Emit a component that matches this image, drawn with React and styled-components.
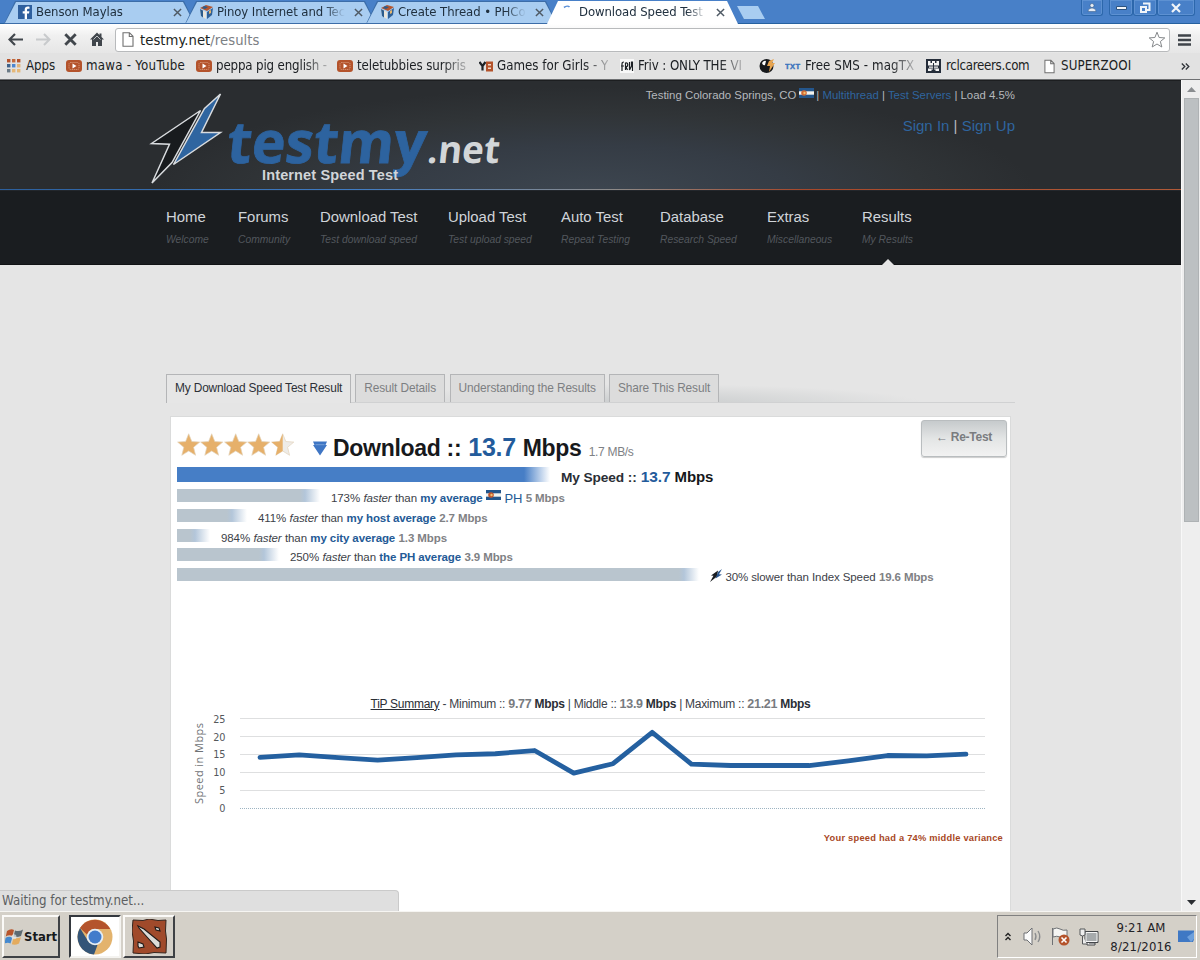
import React from 'react'
import styled, { createGlobalStyle } from 'styled-components'

const GlobalStyle = createGlobalStyle`
* { box-sizing: border-box; }
body {
  margin: 0;
  overflow: hidden;
  background: #e5e5e5;
}
svg { display: block; flex: none; }
`

const ui = '"DejaVu Sans Condensed", "DejaVu Sans", sans-serif'
const arial = '"Liberation Sans", Arial, sans-serif'

const tabs = [
  { title: 'Benson Maylas', icon: 'facebook' },
  { title: 'Pinoy Internet and Tec', icon: 'cube' },
  { title: 'Create Thread • PHCo', icon: 'cube' },
  { title: 'Download Speed Test', icon: 'loading', active: true },
]

const bookmarks = [
  { icon: 'apps', text: 'Apps', width: 59, iconWidth: 19 },
  { icon: 'video', text: 'mawa - YouTube', width: 130, iconWidth: 20, spacing: 0.25 },
  { icon: 'video', text: 'peppa pig english -', width: 141, iconWidth: 20, fade: true, spacing: -0.15 },
  { icon: 'video', text: 'teletubbies surpris', width: 142, iconWidth: 20, fade: true },
  { icon: 'y8', text: 'Games for Girls - Y', width: 141, iconWidth: 18, fade: true, spacing: 0 },
  { icon: 'friv', text: 'Friv : ONLY THE VI', width: 139, iconWidth: 18, fade: true },
  { icon: 'bolt', text: '', width: 26, iconWidth: 20 },
  { icon: 'txt', text: 'Free SMS - magTX', width: 141, iconWidth: 20, fade: true, spacing: 0.1 },
  { icon: 'castle', text: 'rclcareers.com', width: 118, iconWidth: 20, spacing: -0.3 },
  { icon: 'page', text: 'SUPERZOOI', width: 120, iconWidth: 17, spacing: 0.1 },
]

const menu = [
  ['Home', 'Welcome', 72],
  ['Forums', 'Community', 82],
  ['Download Test', 'Test download speed', 128],
  ['Upload Test', 'Test upload speed', 113],
  ['Auto Test', 'Repeat Testing', 99],
  ['Database', 'Research Speed', 107],
  ['Extras', 'Miscellaneous', 95],
  ['Results', 'My Results', 53],
]

const resultTabs = [
  ['My Download Speed Test Result', 185],
  ['Result Details', 90],
  ['Understanding the Results', 155],
  ['Share This Result', 110],
]

const averages = [
  { bar: 143, percent: '173%', name: 'my average', flag: true, speed: '5 Mbps' },
  { bar: 70, percent: '411%', name: 'my host average', speed: '2.7 Mbps' },
  { bar: 33, percent: '984%', name: 'my city average', speed: '1.3 Mbps' },
  { bar: 102, percent: '250%', name: 'the PH average', speed: '3.9 Mbps' },
]

const samples = [14.2, 14.9, 14.1, 13.4, 14.1, 14.9, 15.2, 16.1, 9.77, 12.4, 21.21, 12.3, 11.9, 11.9, 11.9, 13.2, 14.7, 14.6, 15.1]

const Cube = () => (
  <svg width="15" height="16" viewBox="0 0 15 16">
    <path d="M1 4 7 1l7 2-6 4z" fill="#b5562f" />
    <path d="M1 5l6 3v7l-5-3z" fill="#e8e4da" />
    <path d="M8 8l6-4-1 7-5 4z" fill="#2f6096" />
    <path d="M1 5l3 1.500v7L2 12zM5 2l4 1-3 2-3-1z" fill="#2b5b8c" />
    <path d="M10 7l2-1v3l-2 1z" fill="#e6b56c" />
  </svg>
)

const Facebook = () => (
  <svg width="14" height="14" viewBox="0 0 14 14">
    <path d="M0 0h14v14H0z" fill="#2e5f9e" />
    <path d="M9 14V8.500h2l.4-2.300H9V5c0-.8.400-1.200 1.200-1.200h1.300V1.700C11 1.600 10.500 1.500 9.900 1.500 7.900 1.500 6.700 2.700 6.700 4.700v1.500h-2v2.300h2V14z" fill="#fff" />
  </svg>
)

const Spinner = () => (
  <svg width="14" height="14" viewBox="0 0 14 14">
    <path d="M3 2.500C5 .8 7.500 1 8.500 2" fill="none" stroke="#5a8fd6" strokeWidth="1.700" />
  </svg>
)

const Flag = ({ dark }) => (
  <svg width="15" height="10" viewBox="0 0 15 10">
    <path d="M0 0h15v10H0z" fill="#24568c" />
    <path d="M0 3.300h15v3.400H0z" fill="#f4f4f0" />
    <circle cx="5" cy="5" r="2.800" fill={dark ? '#c2562c' : '#cf6a36'} />
    <circle cx="5.500" cy="5" r="1.200" fill="#efc070" />
  </svg>
)

const Page = ({ size = 12 }) => (
  <svg width={size} height="15" viewBox="0 0 12 15">
    <path d="M1 .7h6.500L11 4.300v10H1zM7.300.8v3.700H11" fill="#fff" stroke="#707070" strokeWidth="1.100" />
  </svg>
)

const icons = {
  apps: (
    <svg width="14" height="14" viewBox="0 0 14 14">
      {['#b5532c', '#c46a3c', '#b5532c', '#3f628a', '#4b86d0', '#e1b478', '#6b7a86', '#e6b878', '#e6b878'].map((c, i) => (
        <rect key={i} x={(i % 3) * 5} y={Math.floor(i / 3) * 5} width="3.400" height="3.400" fill={c} />
      ))}
    </svg>
  ),
  video: (
    <svg width="16" height="12" viewBox="0 0 16 12">
      <rect width="16" height="12" rx="3" fill="#b4532b" />
      <rect x="3" y="2.500" width="10" height="7" rx="1.500" fill="none" stroke="#dca183" strokeDasharray="1 1" />
      <path d="M6.500 3.500v5l4-2.500z" fill="#fff" />
    </svg>
  ),
  y8: (
    <svg width="14" height="11" viewBox="0 0 14 11">
      <path d="M.5 1l3 4v4.500M6.500 1l-3 4" fill="none" stroke="#1d2226" strokeWidth="2.200" />
      <rect x="7" y=".5" width="7" height="10" fill="#b4532b" />
      <path d="M9 3h3v1.500H9zM9 6.500h3V8H9z" fill="#f4d9c8" />
    </svg>
  ),
  friv: (
    <svg width="14" height="14" viewBox="0 0 14 14">
      <path d="M0 0h14v14H0z" fill="#f8f8f8" />
      <path d="M2 12V5q0-2 2-2M1 7h3M5.500 11V4q3-.5 2 3l-1.500 1 1.500 3M9.500 3v8l2-4V3h1v9" fill="none" stroke="#1c2024" strokeWidth="1.200" />
    </svg>
  ),
  bolt: (
    <svg width="16" height="14" viewBox="0 0 16 14">
      <circle cx="7.500" cy="7" r="7" fill="#17191c" />
      <path d="M3 4q2-3 4-2L6 6q-2 1-3-2z" fill="#fff" />
      <path d="M10 2l5-2-2 4h3l-6 9 1-6H8z" fill="#e7a450" />
    </svg>
  ),
  txt: (
    <svg width="16" height="8" viewBox="0 0 16 8">
      <text x="0" y="7" fontFamily={arial} fontSize="7.500" fontWeight="bold" fill="#3b74bd" stroke="#3b74bd" strokeWidth=".4" textLength="15">TXT</text>
    </svg>
  ),
  castle: (
    <svg width="15" height="14" viewBox="0 0 15 14">
      <path d="M0 0h15v14H0z" fill="#252d3a" />
      <path d="M2 2h2.500v2H6V2h3v2h1.500V2H13v4.500H2zM3 7.500h9v1.200H3zM2 9.500h11V12H9.500v-1.500h-4V12H2z" fill="#f4f4f4" />
      <path d="M7 4h1v7H7z" fill="#252d3a" />
    </svg>
  ),
  page: <Page size={11} />,
}

const tabIcons = { facebook: <Facebook />, cube: <Cube />, loading: <Spinner /> }

const Star = ({ half }) => (
  <svg width="23.400" height="24" viewBox="0 0 23.400 24">
    <path d="M11.700.8l3.100 7.700 8 .6-6.200 5.200 2 8-6.900-4.300-6.900 4.300 2-8L.6 9.100l8-.6z" fill={half ? '#eeece8' : '#e6b06a'} stroke="#e3d3ba" strokeWidth=".7" />
    {half && <path d="M11.700.8v17.200l-6.900 4.300 2-8L.6 9.100l8-.6z" fill="#e6b06a" />}
  </svg>
)

const DownArrow = () => (
  <svg width="14" height="15" viewBox="0 0 14 15">
    <path d="M0 .5h14L12.500 4H14L7 14.500 0 4h1.500z" fill="#3f76c4" />
    <path d="M2.500 3.700h9" stroke="#8cb0e0" strokeWidth=".7" />
  </svg>
)

const SmallBolt = () => (
  <svg width="12" height="13" viewBox="0 0 12 13">
    <path d="M8 1.500L1 6.500l2.500.3L0 13l7-5.500z" fill="#191c20" />
    <path d="M12 0L8 3 5.500 9.500 12 5.500 9 5.200z" fill="#2a568e" />
  </svg>
)

const points = samples.map((v, i) => `${74 + i * 39.22},${108 - v * 3.570}`).join(' ')

const Chart = () => (
  <svg width="800" height="120" viewBox="0 0 800 120">
    {[25, 20, 15, 10, 5, 0].map((v, i) => (
      <g key={v}>
        <line x1="54" x2="799" y1={18.500 + i * 18} y2={18.500 + i * 18} stroke={v ? '#dedfe0' : '#9db4c2'} strokeDasharray={v ? 'none' : '1 1'} />
        <text x="39.500" y={22.700 + i * 17.800} textAnchor="end" fontFamily={ui} fontSize="10.800" fill="#55585c">{v}</text>
      </g>
    ))}
    <text transform="translate(17 104) rotate(-90)" fontFamily="Open Sans, sans-serif" fontSize="11" textLength="81" fill="#6f7275">Speed in Mbps</text>
    <polyline points={points} fill="none" stroke="#2460a0" strokeWidth="4.800" strokeLinecap="round" strokeLinejoin="round" />
  </svg>
)

const Logo = () => (
  <svg width="370" height="96" viewBox="0 0 370 96">
    <path d="M51.500 17.500L2.500 50.500l18 .8L3 90l20-20.500z" fill="#181b1e" stroke="#d9dcdf" strokeWidth="1.500" strokeLinejoin="miter" />
    <path d="M71.500 1L55.500 15.500 24.500 71.500 71.500 39.500H52.500z" fill="#2f65a0" stroke="#d9dcdf" strokeWidth="1.500" />
    <g transform="skewX(-6)">
      <text x="84" y="70.500" fontFamily="Open Sans, sans-serif" fontWeight="bold" fontSize="58" textLength="199" lengthAdjust="spacingAndGlyphs" fill="#2d639f" stroke="#2d639f" strokeWidth=".8">testmy</text>
      <text x="285" y="70.500" fontFamily="Open Sans, sans-serif" fontWeight="bold" fontSize="38" textLength="72" lengthAdjust="spacingAndGlyphs" fill="#d3d6d8">.net</text>
    </g>
    <text x="113" y="86.500" fontFamily={arial} fontWeight="bold" fontSize="14.500" textLength="136" fill="#d2d5d8">Internet Speed Test</text>
  </svg>
)

const Screen = styled.div`
width: 1200px;
height: 960px;
display: flex;
flex-direction: column;
overflow: hidden;
font-family: ${arial};
white-space: nowrap;
`

const TitleBar = styled.div`
height: 24px;
flex: none;
display: flex;
align-items: flex-start;
padding-left: 4px;
background: #4880c8;
border-bottom: 1px solid #26619f;
`

const TabShape = styled.div`
width: 191px;
height: 24px;
flex: none;
margin-right: -10px;
padding: 1px 1px 0;
position: relative;
z-index: ${props => props.$active ? 2 : 1};
background: ${props => props.$active ? '#fff' : '#3c6da8'};
clip-path: polygon(0 100%, 11px 1px, 180px 1px, 100% 100%);
`

const TabFace = styled.div`
height: 22px;
display: flex;
align-items: center;
padding: 0 11px 0 13px;
background: ${props => props.$active ? '#fff' : '#a9cdf1'};
clip-path: polygon(0 100%, 11px 1px, 178px 1px, 100% 100%);
`

const TabIcon = styled.span`
width: 18px;
flex: none;
`

const TabTitle = styled.span`
flex: 1;
overflow: hidden;
font: 13px/20px ${ui};
letter-spacing: -0.07px;
color: #20303f;
mask-image: linear-gradient(90deg, #000 84%, transparent);
`

const Close = styled.span`
width: 10px;
margin-left: 9px;
`

const NewTab = styled.div`
width: 28px;
height: 13px;
margin: 6px 0 0 9px;
background: #a9cdf1;
clip-path: polygon(0 0, 21px 0, 28px 100%, 7px 100%);
`

const WindowButtons = styled.div`
display: flex;
margin-left: auto;
padding-right: 5px;
`

const WindowButton = styled.div`
width: ${props => props.$width}px;
height: 16px;
margin-right: ${props => props.$gap || 0}px;
display: flex;
align-items: center;
justify-content: center;
border: 1px solid #2c67ac;
border-top: 0;
border-radius: 0 0 3px 3px;
box-shadow: inset 0 0 0 1px #5d91d2;
`

const Toolbar = styled.div`
height: 29px;
flex: none;
display: flex;
align-items: center;
padding: 3px 9px 1px 8px;
background: linear-gradient(#fff, #f0f0f0 40%, #e6e6e6);
`

const NavIcons = styled.div`
width: 107px;
display: flex;
align-items: center;
gap: 13px;
`

const Omnibox = styled.div`
width: 1055px;
height: 24px;
display: flex;
align-items: center;
padding: 0 3px 0 6px;
gap: 6px;
background: #fff;
border: 1px solid #b8babc;
border-radius: 3px;
font: 14.700px/22px ${ui};
letter-spacing: 0.05px;
color: #1c1f22;
`

const Url = styled.span`
flex: 1;
span { color: #7c8084; }
`

const Bookmarks = styled.div`
height: 27px;
flex: none;
display: flex;
align-items: center;
padding: 0 10px 0 7px;
background: #e2e2e2;
border-bottom: 1px solid #6e7072;
font: 13.200px/20px ${ui};
color: #1b1e22;
`

const Bookmark = styled.div`
width: ${props => props.$width}px;
flex: none;
display: flex;
align-items: center;
`

const BookmarkIcon = styled.span`
width: ${props => props.$width}px;
flex: none;
`

const BookmarkText = styled.span`
letter-spacing: ${props => props.$spacing}px;
mask-image: ${props => props.$fade ? 'linear-gradient(90deg, #000 78%, rgba(0, 0, 0, .25))' : 'none'};
`

const Viewport = styled.div`
height: 831px;
flex: none;
display: flex;
position: relative;
`

const Site = styled.div`
width: 1181px;
display: flex;
flex-direction: column;
overflow: hidden;
background: #e5e5e5;
`

const Scrollbar = styled.div`
width: 19px;
display: flex;
flex-direction: column;
align-items: center;
background: #eeeeee;
border-left: 1px solid #f8f8f8;
`

const ScrollArrow = styled.div`
height: 18px;
display: flex;
align-items: center;
`

const Thumb = styled.div`
width: 15px;
height: 424px;
margin-bottom: auto;
background: #bcc0c2;
border: 1px solid #aeb2b4;
`

const Header = styled.header`
height: 109px;
flex: none;
display: flex;
justify-content: space-between;
padding: 12px 166px 0 149px;
background: radial-gradient(ellipse 440px 106px at 595px 112px, #3d4650, #353c45 45%, #303437 75%, #2a2d30);
border-top: 1px solid #1c1e20;
`

const HeaderLine = styled.div`
height: 2px;
flex: none;
background: linear-gradient(90deg, #2c5f9c, #3f7cc4 30%, #8d8a88 52%, #a8482a 68%, #b05a38);
border-bottom: 1px solid #23272c;
`

const HeaderInfo = styled.div`
display: flex;
flex-direction: column;
align-items: flex-end;
color: #b6b9bd;
`

const ServerLine = styled.div`
display: flex;
align-items: flex-start;
gap: 2.500px;
font-size: 11.400px;
line-height: 13px;
margin-top: -4px;
svg { margin-top: -1px; }
`

const Blue = styled.span`
color: #2f659f;
`

const SignLine = styled.div`
margin-top: 14px;
font-size: 15px;
line-height: 20px;
`

const Menu = styled.nav`
height: 74px;
flex: none;
display: flex;
padding: 16px 0 0 166px;
background: #1a1d20;
border-bottom: 1px solid #111315;
`

const MenuItem = styled.div`
width: ${props => props.$width}px;
position: relative;
`

const MenuTitle = styled.div`
font-size: 14.900px;
line-height: 20px;
color: #d0d4d9;
`

const MenuHint = styled.div`
margin-top: 7px;
font-size: 10.300px;
line-height: 12px;
font-style: italic;
color: #52575d;
`

const Notch = styled.div`
position: absolute;
left: 20px;
bottom: -1px;
border: 6px solid transparent;
border-top: 0;
border-bottom-color: #e5e5e5;
`

const ResultTabs = styled.div`
height: 29px;
flex: none;
display: flex;
gap: 4.300px;
margin: 109px 166px 0;
border-bottom: 1px solid #d0d1d2;
background: radial-gradient(ellipse 280px 20px at 480px 30px, #c8cbcc, #e5e5e5);
`

const ResultTab = styled.div`
width: ${props => props.$width}px;
height: ${props => props.$active ? 29 : 28}px;
padding-left: 8px;
border: 1px solid #b4b5b7;
border-bottom: 0;
background: ${props => props.$active ? '#e6e6e6' : '#dcdcdc'};
font-size: 11.900px;
line-height: 26px;
letter-spacing: ${props => props.$active ? -0.15 : -0.12}px;
color: ${props => props.$active ? '#2c3036' : '#7d7f82'};
`

const Panel = styled.main`
width: 841px;
flex: 1;
margin: 13px 0 0 170px;
padding: 0 3px 0 6px;
background: #fff;
border: 1px solid #dadbdb;
border-bottom: 0;
`

const PanelTop = styled.div`
height: 50px;
display: flex;
align-items: flex-start;
`

const Stars = styled.div`
display: flex;
padding-top: 16px;
width: 136px;
`

const Heading = styled.div`
display: flex;
align-items: baseline;
padding-top: 13px;
line-height: 34px;
font-size: 23px;
letter-spacing: -0.3px;
font-weight: bold;
color: #17191c;
svg { margin-right: 6px; }
`

const Speed = styled.span`
font-size: ${props => props.$size}px;
color: #235b9b;
margin: 0 ${props => props.$gap}px;
`

const Bytes = styled.span`
margin-left: 7px;
font-size: 12px;
font-weight: normal;
color: #7e8185;
`

const Retest = styled.button`
width: 86px;
height: 37px;
margin: 3px 0 0 auto;
padding: 0 0 4px;
border: 1px solid #b9bdbf;
border-radius: 3px;
background: linear-gradient(#c6cacc, #e3e5e5 50%, #f2f2f2);
box-shadow: 0 1px 1px #ccc;
font: bold 12px ${arial};
letter-spacing: -0.25px;
color: #7a7c7f;
`

const ResultRow = styled.div`
height: ${props => props.$main ? 22.2 : 19.700}px;
display: flex;
align-items: flex-start;
font-size: 11.500px;
letter-spacing: -0.1px;
color: #3c4148;
`

const Bar = styled.div`
height: ${props => props.$main ? 15 : 13}px;
margin-right: 11px;
background: ${props => props.$main
    ? 'linear-gradient(90deg, #467ec6 calc(100% - 26px), rgba(255, 255, 255, 0))'
    : 'linear-gradient(90deg, #b9c5ce calc(100% - 20px), #b3c6da calc(100% - 15px), rgba(255, 255, 255, 0))'};
`

const MySpeed = styled.div`
display: flex;
align-items: baseline;
gap: 4px;
line-height: 19px;
font-size: 13.700px;
font-weight: bold;
color: #2a2e35;
b { font-size: 15px; color: #15171a; }
`

const RowText = styled.div`
display: flex;
gap: 3.400px;
padding-top: 2px;
line-height: 15px;
svg { margin: -1px 0 0; }
strong { color: #245a96; }
b { color: #808184; }
`

const PH = styled.span`
font-size: 13px;
color: #245a96;
`

const Summary = styled.div`
height: 19px;
margin: 106.300px 3px 0 0;
padding-top: 2px;
text-align: center;
font-size: 12px;
line-height: 17px;
letter-spacing: -0.28px;
color: #3c4148;
b { color: #787b7f; font-size: 12.500px; }
strong { color: #2a2e35; }
u { color: #2a2e35; }
`

const Plot = styled.div`
margin: -13px 0 0 9px;
`

const Variance = styled.div`
margin-top: 11px;
padding-right: 4px;
text-align: right;
font: bold 9.300px/14px ${arial};
letter-spacing: 0.23px;
color: #a8481f;
`

const Status = styled.div`
position: absolute;
left: 0;
bottom: 0;
width: 399px;
height: 21px;
padding-left: 2px;
background: #dfdfdf;
border: 1px solid #cacaca;
border-left: 0;
border-bottom: 0;
border-top-right-radius: 4px;
font: 13.200px/20px ${ui};
color: #5c5e61;
`

const Taskbar = styled.div`
height: 49px;
flex: none;
display: flex;
align-items: center;
padding: 3px 3px 2px 2px;
background: #d4d0c8;
border-top: 1px solid #f6f5f2;
`

const TaskButton = styled.div`
width: ${props => props.$width}px;
height: 43px;
margin-right: ${props => props.$gap || 0}px;
display: flex;
align-items: center;
justify-content: center;
background: ${props => props.$pressed ? '#fff' : '#d4d0c8'};
border: 2px solid;
border-color: ${props => props.$pressed ? '#34383e #f4f3f0 #f4f3f0 #34383e' : '#fbfaf8 #3e4145 #3e4145 #fbfaf8'};
font: bold 13px ${ui};
letter-spacing: -0.1px;
color: #17191c;
`

const Tray = styled.div`
width: 200px;
height: 43px;
margin-left: auto;
display: flex;
align-items: center;
padding: 0 1px 0 7px;
border: 1px solid;
border-color: #808080 #fff #fff #808080;
`

const TrayIcons = styled.div`
display: flex;
align-items: center;
width: 104px;
gap: 8.500px;
svg:first-child { margin-right: 3px; }
`

const Clock = styled.div`
width: 64px;
margin-right: 5px;
text-align: center;
font: 13px/19px ${ui};
letter-spacing: 0.15px;
color: #1f2226;
`

const Cross = ({ size = 10, color = '#4e5964', width = 1.6 }) => (
  <svg width={size} height={size} viewBox="0 0 10 10">
    <path d="M1 1l8 8M9 1L1 9" stroke={color} strokeWidth={width} />
  </svg>
)

const BrowserTabs = () => (
  <TitleBar>
    {tabs.map(t => (
      <TabShape key={t.title} $active={t.active}>
        <TabFace $active={t.active}>
          <TabIcon>{tabIcons[t.icon]}</TabIcon>
          <TabTitle>{t.title}</TabTitle>
          <Close><Cross size={9} /></Close>
        </TabFace>
      </TabShape>
    ))}
    <NewTab />
    <WindowButtons>
      <WindowButton $width={22} $gap={6}>
        <svg width="10" height="9" viewBox="0 0 10 9"><circle cx="5" cy="2.500" r="2" fill="#e9eef5" stroke="#2c5380" strokeWidth=".5" /><path d="M1 8.500q0-3.500 4-3.500t4 3.500z" fill="#e9eef5" stroke="#2c5380" strokeWidth=".5" /></svg>
      </WindowButton>
      <WindowButton $width={24}>
        <svg width="11" height="4" viewBox="0 0 11 4"><path d="M.5.5h10v3H.5z" fill="#f2f5f9" stroke="#2c5380" /></svg>
      </WindowButton>
      <WindowButton $width={24}>
        <svg width="12" height="12" viewBox="0 0 12 12"><path d="M4 1.500h6.500V8H8" fill="none" stroke="#f2f5f9" strokeWidth="2" /><path d="M2 5h5v5H2z" fill="none" stroke="#f2f5f9" strokeWidth="2" /></svg>
      </WindowButton>
      <WindowButton $width={38}><Cross color="#f2f5f9" width={2.2} /></WindowButton>
    </WindowButtons>
  </TitleBar>
)

const AddressBar = () => (
  <Toolbar>
    <NavIcons>
      <svg width="15" height="13" viewBox="0 0 15 13"><path d="M7 1L1.500 6.500 7 12M2 6.500h13" fill="none" stroke="#41464c" strokeWidth="2.200" /></svg>
      <svg width="15" height="13" viewBox="0 0 15 13"><path d="M8 1l5.500 5.500L8 12M13 6.500H0" fill="none" stroke="#c8cacc" strokeWidth="2" /></svg>
      <Cross size={13} color="#41464c" width={2.2} />
      <svg width="14" height="15" viewBox="0 0 14 15"><path d="M7 .5L0 7.500h2V14h4v-4h2v4h4V7.500h2L11.500 5V1.500h-2V3z" fill="#41464c" /><path d="M7 4l3.500 3.500M7 4L3.500 7.500" stroke="#dfe1e3" strokeWidth=".8" /></svg>
    </NavIcons>
    <Omnibox>
      <Page />
      <Url>testmy.net<span>/results</span></Url>
      <svg width="18" height="17" viewBox="0 0 18 17"><path d="M9 1.200l2.100 5.300 5.700.4-4.400 3.600 1.400 5.500L9 13l-4.800 3 1.400-5.500L1.200 6.900l5.700-.4z" fill="none" stroke="#85888b" /></svg>
    </Omnibox>
    <svg width="13" height="12" viewBox="0 0 13 12" style={{ marginLeft: 'auto' }}><path d="M0 1.500h13M0 6h13M0 10.500h13" stroke="#3f444a" strokeWidth="2.600" /></svg>
  </Toolbar>
)

const BookmarkBar = () => (
  <Bookmarks>
    {bookmarks.map((b, i) => (
      <Bookmark key={i} $width={b.width}>
        <BookmarkIcon $width={b.iconWidth}>{icons[b.icon]}</BookmarkIcon>
        <BookmarkText $fade={b.fade} $spacing={b.spacing ?? -0.1}>{b.text}</BookmarkText>
      </Bookmark>
    ))}
    <svg width="9" height="7" viewBox="0 0 9 7" style={{ marginLeft: 'auto' }}><path d="M.8.5l3 3-3 3M4.800.5l3 3-3 3" fill="none" stroke="#2f3338" strokeWidth="1.300" /></svg>
  </Bookmarks>
)

const Results = () => (
  <Panel>
    <PanelTop>
      <Stars>
        <Star /><Star /><Star /><Star /><Star half />
      </Stars>
      <Heading>
        <DownArrow />
        Download ::<Speed $size={25} $gap={7}>13.7</Speed>Mbps<Bytes>1.7 MB/s</Bytes>
      </Heading>
      <Retest>← Re-Test</Retest>
    </PanelTop>
    <ResultRow $main>
      <Bar $main style={{ width: 373 }} />
      <MySpeed><span>My Speed ::</span><Speed $size={15.500} $gap={0}>13.7</Speed><b>Mbps</b></MySpeed>
    </ResultRow>
    {averages.map(a => (
      <ResultRow key={a.name}>
        <Bar style={{ width: a.bar }} />
        <RowText>
          <span>{a.percent}</span><em>faster</em><span>than</span><strong>{a.name}</strong>
          {a.flag && <Flag dark />}
          {a.flag && <PH>PH</PH>}
          <b>{a.speed}</b>
        </RowText>
      </ResultRow>
    ))}
    <ResultRow>
      <Bar style={{ width: 522 }} />
      <RowText>
        <SmallBolt />
        <span>30% slower than Index Speed</span><b>19.6 Mbps</b>
      </RowText>
    </ResultRow>
    <Summary>
      <u>TiP Summary</u> - Minimum :: <b>9.77</b> <strong>Mbps</strong> | Middle :: <b>13.9</b> <strong>Mbps</strong> | Maximum :: <b>21.21</b> <strong>Mbps</strong>
    </Summary>
    <Plot><Chart /></Plot>
    <Variance>Your speed had a 74% middle variance</Variance>
  </Panel>
)

const WindowsLogo = () => (
  <svg width="19" height="18" viewBox="0 0 19 18">
    <path d="M2 3q4-3 7-1L7.500 8Q4 6.500.8 8.500z" fill="#b8552c" />
    <path d="M10 2.500q4 1.500 8-1L16 8q-4 1.500-7.500.5z" fill="#5d6a72" />
    <path d="M.6 9.700Q4 8 7.300 9.500L5.500 15.500Q3 14-.5 15.500z" fill="#4589cf" />
    <path d="M8.500 10q4 1 7.500-.7L14 15.500q-4 2-7.200.8z" fill="#e4ab5e" />
    <circle cx="9" cy="8.700" r="2.500" fill="#e6eaec" opacity=".7" />
  </svg>
)

const Chrome = () => (
  <svg width="36" height="36" viewBox="0 0 36 36">
    <circle cx="18" cy="18" r="17.500" fill="#e3b36d" />
    <path d="M3 9a17.500 17.500 0 0 1 30.200 1H18a8 8 0 0 0-7.500 6z" fill="#b4542c" />
    <path d="M3 9l8 13q3 4 9.500 4L17 35.500A17.500 17.500 0 0 1 3 9z" fill="#345578" />
    <circle cx="18" cy="18" r="8.300" fill="#e6eef4" />
    <circle cx="18" cy="18" r="6.500" fill="#427ccb" />
  </svg>
)

const Dota = () => (
  <svg width="35" height="35" viewBox="0 0 35 35">
    <path d="M1 1l10 .5L17 0l9 1.500L34 1l-.5 11 1 8-.5 14-12-.5-9 1.500L1 34l.5-12L0 12z" fill="#a04a2b" stroke="#35261f" />
    <path d="M6 7l6 3 16 13v5l-3 1L15 18 7 9zM23 8l4 1 1 3-4-1zM6 23l5 2 1 3-5 1-1-2z" fill="#dcdcd8" stroke="#1f1a18" strokeWidth="1.100" />
  </svg>
)

const Desktop = () => (
  <Taskbar>
    <TaskButton $width={58} $gap={9}><WindowsLogo />Start</TaskButton>
    <TaskButton $width={52} $gap={2} $pressed><Chrome /></TaskButton>
    <TaskButton $width={52}><Dota /></TaskButton>
    <Tray>
      <TrayIcons>
        <svg width="6" height="9" viewBox="0 0 6 9"><path d="M.5 4L3 1.500 5.500 4M.5 8L3 5.500 5.500 8" fill="none" stroke="#222" strokeWidth="1.400" /></svg>
        <svg width="20" height="19" viewBox="0 0 20 19"><path d="M1 6h3l5-5v17l-5-5H1z" fill="#fafafa" stroke="#6e7174" /><path d="M12 6q2 3.500 0 7M15 4q3.500 5.500 0 11" fill="none" stroke="#8a8c8e" strokeWidth="1.300" /></svg>
        <svg width="19" height="19" viewBox="0 0 19 19"><path d="M1.500 18V1M2 2q4-2 7 0 3 2 7 1v8q-4 1-7-1-3-1.500-7 0z" fill="#f5f5f3" stroke="#6e7174" /><circle cx="13" cy="13" r="5.500" fill="#b4532b" /><path d="M10.500 10.500l5 5M15.500 10.500l-5 5" stroke="#fff" strokeWidth="1.600" /></svg>
        <svg width="20" height="18" viewBox="0 0 20 18"><path d="M6 3.500h13v11H6z" fill="#a6aaac" stroke="#44474a" /><path d="M7 4.500h11v9H7z" fill="none" stroke="#f5f5f5" /><path d="M10 15h6v2H8v-2" fill="#f4f4f4" stroke="#44474a" /><path d="M1 1h5v6q-2.500 2-5 0zM3.500 8v8H8" fill="#eee" stroke="#55585b" /></svg>
      </TrayIcons>
      <Clock>9:21 AM<br />8/21/2016</Clock>
      <svg width="17" height="13" viewBox="0 0 17 13"><path d="M0 .5h16v9l-1 2.500H0z" fill="#3f78c4" /><path d="M9 7l7-5v7l-3 3z" fill="#6ea0dc" /></svg>
    </Tray>
  </Taskbar>
)

export default function App() {
  return (
    <Screen>
      <GlobalStyle />
      <BrowserTabs />
      <AddressBar />
      <BookmarkBar />
      <Viewport>
        <Site>
          <Header>
            <Logo />
            <HeaderInfo>
              <ServerLine>
                <span>Testing Colorado Springs, CO</span><Flag />
                <span>| <Blue>Multithread</Blue> | <Blue>Test Servers</Blue> | Load 4.5%</span>
              </ServerLine>
              <SignLine><Blue>Sign In</Blue> | <Blue>Sign Up</Blue></SignLine>
            </HeaderInfo>
          </Header>
          <HeaderLine />
          <Menu>
            {menu.map(([title, hint, width]) => (
              <MenuItem key={title} $width={width}>
                <MenuTitle>{title}</MenuTitle>
                <MenuHint>{hint}</MenuHint>
                {title === 'Results' && <Notch />}
              </MenuItem>
            ))}
          </Menu>
          <ResultTabs>
            {resultTabs.map(([title, width], i) => (
              <ResultTab key={title} $width={width} $active={i === 0}>{title}</ResultTab>
            ))}
          </ResultTabs>
          <Results />
        </Site>
        <Scrollbar>
          <ScrollArrow>
            <svg width="9" height="5" viewBox="0 0 9 5"><path d="M0 5l4.500-5L9 5z" fill="#8a8d90" /></svg>
          </ScrollArrow>
          <Thumb />
          <ScrollArrow>
            <svg width="9" height="5" viewBox="0 0 9 5"><path d="M0 0h9L4.500 5z" fill="#2b2e32" /></svg>
          </ScrollArrow>
        </Scrollbar>
        <Status>Waiting for testmy.net...</Status>
      </Viewport>
      <Desktop />
    </Screen>
  )
}
